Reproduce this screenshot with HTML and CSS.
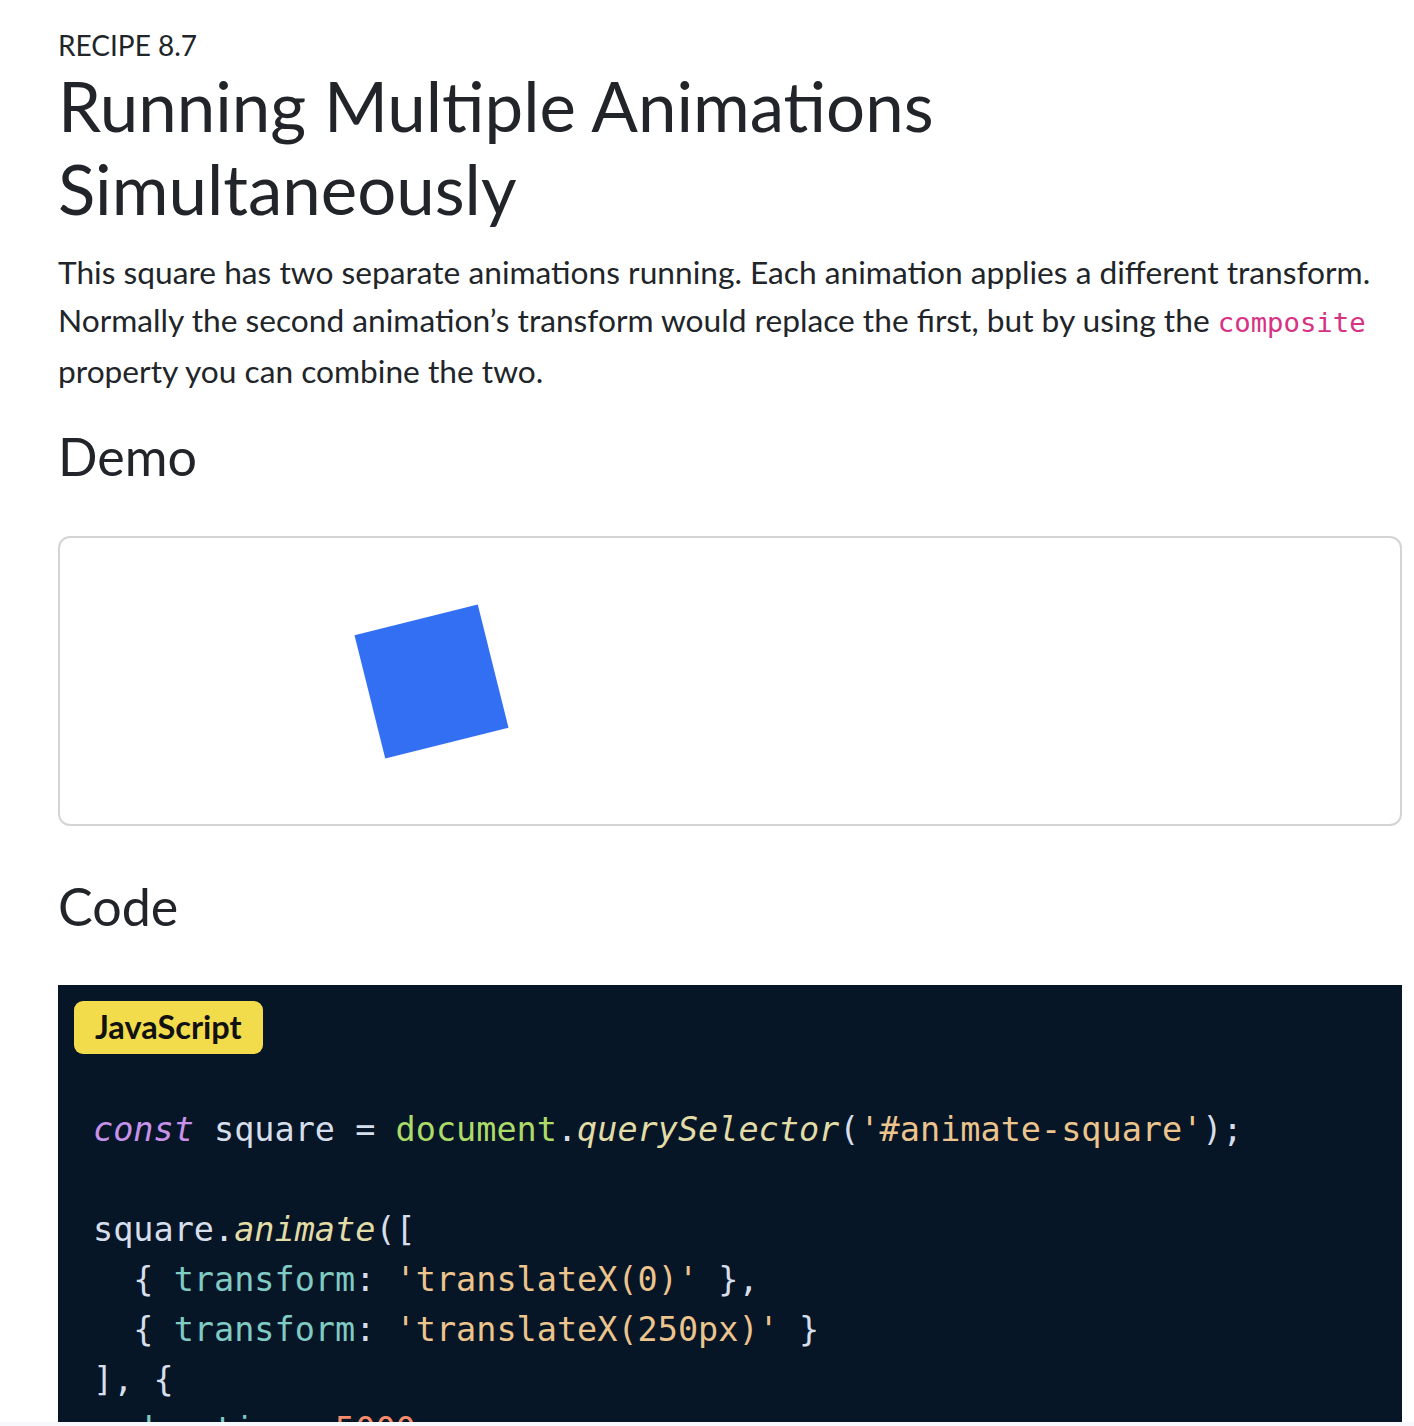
FILE: index.html
```html
<!DOCTYPE html>
<html lang="en">
<head>
<meta charset="utf-8">
<title>Running Multiple Animations Simultaneously</title>
<link rel="stylesheet" href="styles.css">
</head>
<body>
<main class="page">
  <div class="eyebrow">RECIPE 8.7</div>
  <h1 class="title">Running Multiple Animations<br>Simultaneously</h1>
  <p class="intro">This square has two separate animations running. Each animation applies a different transform. Normally the second animation’s transform would replace the first, but by using the <code class="inline-code">composite</code> property you can combine the two.</p>

  <h2 class="section-title demo-title">Demo</h2>
  <div class="demo">
    <div class="square"></div>
  </div>

  <h2 class="section-title code-title">Code</h2>
  <div class="code-block">
    <span class="lang-badge">JavaScript</span>
<pre class="code"><span class="kw">const</span> <span class="var">square</span> <span class="pun">=</span> <span class="obj">document</span><span class="pun">.</span><span class="fn">querySelector</span><span class="pun">(</span><span class="str">'#animate-square'</span><span class="pun">);</span>

<span class="var">square</span><span class="pun">.</span><span class="fn">animate</span><span class="pun">([</span>
<span class="pun">  {</span> <span class="prop">transform</span><span class="pun">:</span> <span class="str">'translateX(0)'</span> <span class="pun">},</span>
<span class="pun">  {</span> <span class="prop">transform</span><span class="pun">:</span> <span class="str">'translateX(250px)'</span> <span class="pun">}</span>
<span class="pun">], {</span>
  <span class="prop">duration</span><span class="pun">:</span> <span class="num">5000</span><span class="pun">,</span>
  <span class="prop">iterations</span><span class="pun">:</span> <span class="obj">Infinity</span><span class="pun">,</span>
  <span class="prop">direction</span><span class="pun">:</span> <span class="str">'alternate'</span><span class="pun">,</span>
  <span class="prop">easing</span><span class="pun">:</span> <span class="str">'ease-in-out'</span>
<span class="pun">});</span></pre>
  </div>
</main>
<div class="bottom-strip"></div>
</body>
</html>
```

FILE: styles.css
```css
html, body {
  margin: 0;
  padding: 0;
  background: #ffffff;
}

body {
  font-family: Lato, "Open Sans", "Liberation Sans", sans-serif;
  color: #212529;
  overflow: hidden;
}

.page {
  padding: 29px 12px 0 58px;
  width: 1344px;
}

.eyebrow {
  font-size: 28px;
  line-height: 32px;
  margin: 0 0 4px 0;
}

.title {
  font-size: 69px;
  font-weight: 400;
  line-height: 82.8px;
  margin: 0 0 17px 0;
}

.intro {
  font-size: 31.7px;
  line-height: 48px;
  margin: 0 0 30px 0;
}

.inline-code {
  font-family: "DejaVu Sans Mono", "Liberation Mono", monospace;
  font-size: 27.3px;
  color: #d63384;
}

.section-title {
  font-size: 52px;
  font-weight: 400;
  line-height: 62.4px;
  margin: 0;
}

.demo-title {
  margin-bottom: 49px;
}

.demo {
  box-sizing: border-box;
  width: 1344px;
  height: 290px;
  border: 2px solid #d4d4d4;
  border-radius: 12px;
  display: flex;
  align-items: center;
  padding-left: 308px;
  margin-bottom: 49px;
}

.square {
  width: 127px;
  height: 127px;
  background: #336ff2;
  transform: rotate(-14deg);
}

.code-title {
  margin-bottom: 48px;
}

.code-block {
  box-sizing: border-box;
  width: 1344px;
  background: #071627;
  padding: 16px 0 40px 16px;
}

.lang-badge {
  display: inline-block;
  background: #f2dc4c;
  color: #111111;
  font-weight: 700;
  font-size: 32.5px;
  line-height: 38px;
  padding: 7px 21px 8px 21px;
  border-radius: 9px;
}

.code {
  margin: 51px 0 0 19px;
  font-family: "DejaVu Sans Mono", "Liberation Mono", monospace;
  font-size: 33.5px;
  line-height: 50px;
  color: #d6deeb;
}

.kw { color: #c792ea; font-style: italic; }
.var { color: #d6deeb; }
.pun { color: #d6deeb; }
.obj { color: #addb67; }
.fn { color: #e2dca6; font-style: italic; }
.str { color: #ecc48d; }
.prop { color: #80cbc4; }
.num { color: #f78c6c; }

.bottom-strip {
  position: fixed;
  left: 0;
  right: 0;
  bottom: 0;
  height: 4px;
  background: #f6f8fb;
}
```
